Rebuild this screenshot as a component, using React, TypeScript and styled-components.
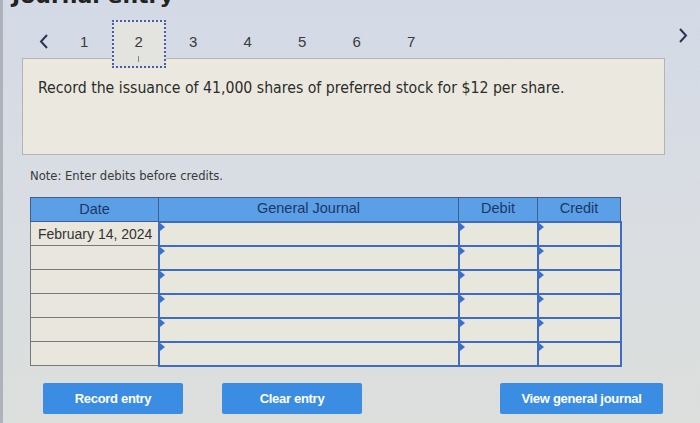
import styled, { createGlobalStyle } from "styled-components";

const GlobalStyle = createGlobalStyle`
  html, body {
    margin: 0;
    padding: 0;
    background: #d8dde6;
  }
  * {
    box-sizing: border-box;
  }
`;

const Page = styled.div`
  width: 700px;
  height: 423px;
  overflow: hidden;
  border-left: 3px solid #aeb3bb;
  background: linear-gradient(180deg, #d3dae6 0%, #d9dde3 45%, #dcdfdc 100%);
  font-family: "DejaVu Sans Condensed", "DejaVu Sans", Verdana, sans-serif;
  color: #333;
`;

const Heading = styled.h1`
  margin: -16px 0 0 9px;
  font-size: 22px;
  line-height: 24px;
  font-weight: bold;
  color: #222;
  font-family: "DejaVu Sans", Verdana, sans-serif;
`;

const Nav = styled.div`
  display: flex;
  align-items: flex-start;
  margin-top: 12px;
  padding-left: 27px;
  padding-right: 4px;
  height: 48px;
`;

const Arrow = styled.div<{ $offset: number }>`
  width: 27px;
  height: 48px;
  display: flex;
  justify-content: center;
  padding-top: ${(p) => p.$offset}px;
  color: #2b3552;
`;

const NextArrow = styled(Arrow)`
  margin-left: auto;
`;

const Tab = styled.div<{ $active?: boolean }>`
  position: relative;
  z-index: 1;
  width: 54.5px;
  height: 48px;
  padding-top: 11px;
  text-align: center;
  font-family: "Liberation Sans", Arial, sans-serif;
  font-size: 15px;
  line-height: 18px;
  color: #3a3a3a;
  border: 2px dotted ${(p) => (p.$active ? "#4a5cae" : "transparent")};
  background: ${(p) => (p.$active ? "#e3e4df" : "transparent")};
`;

const Tick = styled.div`
  width: 1px;
  height: 6px;
  margin: 5px auto 0;
  background: #888;
`;

const QuestionBox = styled.div`
  margin: -10px 0 0 19px;
  width: 643px;
  height: 97px;
  padding: 19px 0 0 15px;
  background: #ebe9df;
  border: 1px solid #b4b5b1;
  font-size: 15.7px;
  line-height: 20px;
  color: #2c2c2c;
`;

const Note = styled.p`
  margin: 13px 0 0 27px;
  font-size: 12.9px;
  line-height: 15px;
  color: #3a3a3a;
`;

const Journal = styled.table`
  margin: 14px 0 0 27px;
  width: 590px;
  border-collapse: collapse;
  table-layout: fixed;
  font-family: "Liberation Sans", Arial, sans-serif;
`;

const HeadCell = styled.th<{ $width: number }>`
  width: ${(p) => p.$width}px;
  height: 24px;
  padding: 0 0 2px;
  background: #5b9fe6;
  border: 1px solid #3e5f8e;
  color: #1d3766;
  font-size: 14.5px;
  font-weight: normal;
`;

const DateCell = styled.td`
  height: 24px;
  padding: 0 0 0 7px;
  background: #e9e7dd;
  border: 1px solid #76787a;
  font-size: 14px;
  color: #333;
  white-space: nowrap;
`;

const InputCell = styled.td`
  position: relative;
  height: 24px;
  padding: 0;
  background: #e8e7de;
  border: 2px solid #3f6cc0;

  &::before {
    content: "";
    position: absolute;
    top: 0;
    left: 0;
    border-top: 4px solid transparent;
    border-bottom: 4px solid transparent;
    border-left: 5px solid #3a6fd2;
  }
`;

const ButtonRow = styled.div`
  display: flex;
  justify-content: space-between;
  margin: 16px 0 0 40px;
  width: 620px;
`;

const ButtonGroup = styled.div`
  display: flex;
  gap: 39px;
`;

const Button = styled.button<{ $width: number }>`
  width: ${(p) => p.$width}px;
  height: 31px;
  border: none;
  border-radius: 2px;
  background: #3a8de2;
  color: #fff;
  font-family: "Liberation Sans", Arial, sans-serif;
  font-weight: bold;
  font-size: 13px;
  letter-spacing: -0.3px;
`;

const Chevron = ({ dir }: { dir: "left" | "right" }) => (
  <svg width="12" height="17" viewBox="0 0 12 17" fill="none">
    <path
      d={dir === "left" ? "M9 2 L3 8.5 L9 15" : "M3 2 L9 8.5 L3 15"}
      stroke="currentColor"
      strokeWidth="2"
    />
  </svg>
);

const rows = ["February 14, 2024", "", "", "", "", ""];

export default function App() {
  return (
    <>
      <GlobalStyle />
      <Page>
        <Heading>Journal entry</Heading>
        <Nav>
          <Arrow $offset={13}>
            <Chevron dir="left" />
          </Arrow>
          {[1, 2, 3, 4, 5, 6, 7].map((n) => (
            <Tab key={n} $active={n === 2}>
              {n}
              {n === 2 && <Tick />}
            </Tab>
          ))}
          <NextArrow $offset={7}>
            <Chevron dir="right" />
          </NextArrow>
        </Nav>
        <QuestionBox>
          Record the issuance of 41,000 shares of preferred stock for $12 per
          share.
        </QuestionBox>
        <Note>Note: Enter debits before credits.</Note>
        <Journal>
          <thead>
            <tr>
              <HeadCell $width={128}>Date</HeadCell>
              <HeadCell $width={300}>General Journal</HeadCell>
              <HeadCell $width={79}>Debit</HeadCell>
              <HeadCell $width={83}>Credit</HeadCell>
            </tr>
          </thead>
          <tbody>
            {rows.map((date, i) => (
              <tr key={i}>
                <DateCell>{date}</DateCell>
                <InputCell />
                <InputCell />
                <InputCell />
              </tr>
            ))}
          </tbody>
        </Journal>
        <ButtonRow>
          <ButtonGroup>
            <Button $width={140}>Record entry</Button>
            <Button $width={140}>Clear entry</Button>
          </ButtonGroup>
          <Button $width={163}>View general journal</Button>
        </ButtonRow>
      </Page>
    </>
  );
}
